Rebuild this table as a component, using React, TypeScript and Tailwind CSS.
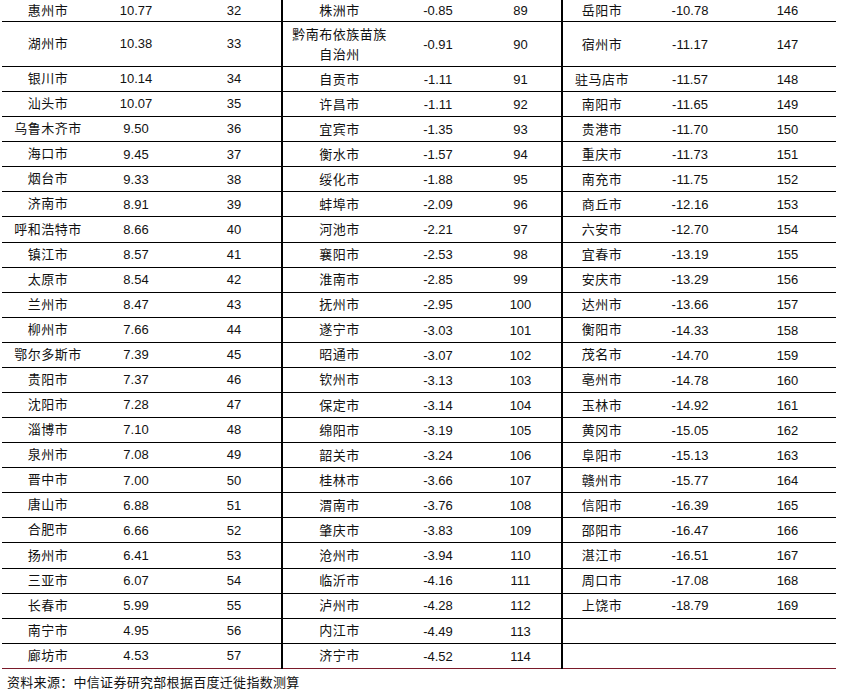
type Row = [string, string, string];

const g1: Row[] = [
  ['惠州市', '10.77', '32'],
  ['湖州市', '10.38', '33'],
  ['银川市', '10.14', '34'],
  ['汕头市', '10.07', '35'],
  ['乌鲁木齐市', '9.50', '36'],
  ['海口市', '9.45', '37'],
  ['烟台市', '9.33', '38'],
  ['济南市', '8.91', '39'],
  ['呼和浩特市', '8.66', '40'],
  ['镇江市', '8.57', '41'],
  ['太原市', '8.54', '42'],
  ['兰州市', '8.47', '43'],
  ['柳州市', '7.66', '44'],
  ['鄂尔多斯市', '7.39', '45'],
  ['贵阳市', '7.37', '46'],
  ['沈阳市', '7.28', '47'],
  ['淄博市', '7.10', '48'],
  ['泉州市', '7.08', '49'],
  ['晋中市', '7.00', '50'],
  ['唐山市', '6.88', '51'],
  ['合肥市', '6.66', '52'],
  ['扬州市', '6.41', '53'],
  ['三亚市', '6.07', '54'],
  ['长春市', '5.99', '55'],
  ['南宁市', '4.95', '56'],
  ['廊坊市', '4.53', '57'],
];

const g2: Row[] = [
  ['株洲市', '-0.85', '89'],
  ['黔南布依族苗族|自治州', '-0.91', '90'],
  ['自贡市', '-1.11', '91'],
  ['许昌市', '-1.11', '92'],
  ['宜宾市', '-1.35', '93'],
  ['衡水市', '-1.57', '94'],
  ['绥化市', '-1.88', '95'],
  ['蚌埠市', '-2.09', '96'],
  ['河池市', '-2.21', '97'],
  ['襄阳市', '-2.53', '98'],
  ['淮南市', '-2.85', '99'],
  ['抚州市', '-2.95', '100'],
  ['遂宁市', '-3.03', '101'],
  ['昭通市', '-3.07', '102'],
  ['钦州市', '-3.13', '103'],
  ['保定市', '-3.14', '104'],
  ['绵阳市', '-3.19', '105'],
  ['韶关市', '-3.24', '106'],
  ['桂林市', '-3.66', '107'],
  ['渭南市', '-3.76', '108'],
  ['肇庆市', '-3.83', '109'],
  ['沧州市', '-3.94', '110'],
  ['临沂市', '-4.16', '111'],
  ['泸州市', '-4.28', '112'],
  ['内江市', '-4.49', '113'],
  ['济宁市', '-4.52', '114'],
];

const g3: Row[] = [
  ['岳阳市', '-10.78', '146'],
  ['宿州市', '-11.17', '147'],
  ['驻马店市', '-11.57', '148'],
  ['南阳市', '-11.65', '149'],
  ['贵港市', '-11.70', '150'],
  ['重庆市', '-11.73', '151'],
  ['南充市', '-11.75', '152'],
  ['商丘市', '-12.16', '153'],
  ['六安市', '-12.70', '154'],
  ['宜春市', '-13.19', '155'],
  ['安庆市', '-13.29', '156'],
  ['达州市', '-13.66', '157'],
  ['衡阳市', '-14.33', '158'],
  ['茂名市', '-14.70', '159'],
  ['亳州市', '-14.78', '160'],
  ['玉林市', '-14.92', '161'],
  ['黄冈市', '-15.05', '162'],
  ['阜阳市', '-15.13', '163'],
  ['赣州市', '-15.77', '164'],
  ['信阳市', '-16.39', '165'],
  ['邵阳市', '-16.47', '166'],
  ['湛江市', '-16.51', '167'],
  ['周口市', '-17.08', '168'],
  ['上饶市', '-18.79', '169'],
  ['', '', ''],
  ['', '', ''],
];

function City({ name }: { name: string }) {
  const parts = name.split('|');
  return (
    <>
      {parts.map((p, i) => (
        <span key={i} className="block leading-[20px] tracking-[0.5px]">{p}</span>
      ))}
    </>
  );
}

function rowHeight(i: number, total: number) {
  if (i === 0) return 'h-[22px]';
  if (i === 1) return 'h-[45px]';
  return i === total - 1 ? 'h-[25.08px] border-b-[#7a1a2a]' : 'h-[25.08px]';
}

export default function App() {
  const total = g1.length;
  return (
    <div className="w-[845px] h-[693px] bg-white text-[#111] font-['Liberation_Sans','Noto_Sans_CJK_SC',sans-serif] text-[13px]">
      <div className="ml-[2px] w-[834px]">
        {g1.map((r1, i) => {
          const r2 = g2[i];
          const r3 = g3[i];
          return (
            <div
              key={i}
              className={`flex box-border border-b border-black ${rowHeight(i, total)} ${i === 0 ? 'items-start' : 'items-stretch'}`}
            >
              {/* group 1 */}
              <div className={`flex w-[279px] ${i === 0 ? 'h-[21px]' : 'h-full'} items-center`}>
                <div className="w-[92px] text-center"><City name={r1[0]} /></div>
                <div className="w-[84px] text-center">{r1[1]}</div>
                <div className="w-[103px] pl-[9px] text-center">{r1[2]}</div>
              </div>
              {/* group 2 */}
              <div className={`flex w-[280px] border-l-2 border-black ${i === 0 ? 'h-[21px]' : 'h-[calc(100%+1px)]'} items-center`}>
                <div className="w-[113px] text-center"><City name={r2[0]} /></div>
                <div className="w-[84px] text-center">{r2[1]}</div>
                <div className="w-[81px] text-center">{r2[2]}</div>
              </div>
              {/* group 3 */}
              <div className={`flex w-[275px] border-l-2 border-black ${i === 0 ? 'h-[21px]' : 'h-[calc(100%+1px)]'} items-center`}>
                <div className="w-[78px] text-center"><City name={r3[0]} /></div>
                <div className="w-[98px] text-center">{r3[1]}</div>
                <div className="w-[97px] text-center">{r3[2]}</div>
              </div>
            </div>
          );
        })}
      </div>
      <div className="mt-[4px] pl-[7px] leading-[18px] text-[13px] tracking-[0.3px] font-['Noto_Sans_CJK_SC',sans-serif]">
        资料来源：中信证券研究部根据百度迁徙指数测算
      </div>
    </div>
  );
}
